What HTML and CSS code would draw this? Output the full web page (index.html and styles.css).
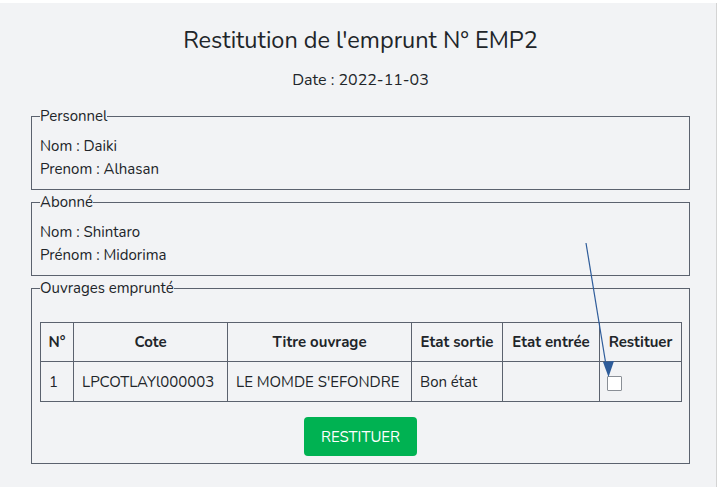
FILE: index.html
```html
<!DOCTYPE html>
<html lang="fr">
<head>
<meta charset="utf-8">
<title>Restitution</title>
<link rel="stylesheet" href="styles.css">
</head>
<body>
<div class="page">
  <main class="panel">
    <h1 class="title">Restitution de l'emprunt N° EMP2</h1>
    <p class="date">Date : 2022-11-03</p>

    <fieldset class="box">
      <legend>Personnel</legend>
      <p class="line">Nom : Daiki</p>
      <p class="line">Prenom : Alhasan</p>
    </fieldset>

    <fieldset class="box">
      <legend>Abonné</legend>
      <p class="line">Nom : Shintaro</p>
      <p class="line">Prénom : Midorima</p>
    </fieldset>

    <fieldset class="box box-works">
      <legend>Ouvrages emprunté</legend>
      <table class="grid">
        <colgroup>
          <col class="c-num"><col class="c-cote"><col class="c-titre"><col class="c-sortie"><col class="c-entree"><col class="c-rest">
        </colgroup>
        <thead>
          <tr><th>N°</th><th>Cote</th><th>Titre ouvrage</th><th>Etat sortie</th><th>Etat entrée</th><th>Restituer</th></tr>
        </thead>
        <tbody>
          <tr><td>1</td><td>LPCOTLAYl000003</td><td>LE MOMDE S'EFONDRE</td><td>Bon état</td><td></td><td><input class="check" type="checkbox"></td></tr>
        </tbody>
      </table>
      <div class="actions"><button class="btn" type="button">RESTITUER</button></div>
    </fieldset>
  </main>
  <svg class="arrow" width="725" height="500" viewBox="0 0 725 500" aria-hidden="true">
    <line x1="586" y1="243" x2="606" y2="365" stroke="#2e5c9a" stroke-width="1.2"/>
    <polygon points="603,362 614,361 608.5,377" fill="#2e5c9a"/>
  </svg>
</div>
</body>
</html>
```
FILE: styles.css
```css
html, body {
  margin: 0;
  padding: 0;
  background: #ffffff;
}
body {
  font-family: "Nunito", "Open Sans", sans-serif;
  color: #212529;
  width: 725px;
  height: 500px;
  overflow: hidden;
}
.page {
  position: relative;
  padding-top: 3px;
}
.panel {
  width: 717px;
  box-sizing: border-box;
  background: #f2f3f5;
  border-right: 1px solid #d4d4d4;
  padding: 22px 26px 21px 31px;
}
.title {
  margin: 0;
  font-size: 23.5px;
  font-weight: 400;
  line-height: 30px;
  text-align: center;
}
.date {
  margin: 13px 0 14px;
  font-size: 16px;
  line-height: 24px;
  text-align: center;
}
.box {
  margin: 0 0 2px;
  padding: 9px 8px 8px;
  border: 1px solid #5b626e;
  min-width: 0;
}
.box legend {
  padding: 0;
  font-size: 15px;
  line-height: 20px;
}
.line {
  margin: 0;
  font-size: 15px;
  line-height: 23px;
}
.box-works {
  padding-top: 24px;
  padding-bottom: 7px;
}
.grid {
  width: 641px;
  border-collapse: collapse;
  table-layout: fixed;
  font-size: 15px;
}
.c-num { width: 33px; }
.c-cote { width: 154px; }
.c-titre { width: 184px; }
.c-sortie { width: 91px; }
.c-entree { width: 97px; }
.c-rest { width: 82px; }
.grid th, .grid td {
  border: 1px solid #5b626e;
  padding: 0 8px;
  white-space: nowrap;
  overflow: hidden;
}
.grid th {
  height: 38px;
  font-weight: 700;
  text-align: center;
  padding: 0 2px;
}
.grid td {
  height: 39px;
  text-align: left;
}
.check {
  appearance: none;
  -webkit-appearance: none;
  display: block;
  width: 15px;
  height: 15px;
  margin: 4px 0 0 -1px;
  box-sizing: border-box;
  border: 1px solid #8a8f96;
  border-radius: 1px;
  background: #ffffff;
}
.actions {
  display: flex;
  justify-content: center;
  margin-top: 15px;
}
.btn {
  width: 113px;
  height: 39px;
  border: 0;
  border-radius: 4px;
  background: #00b252;
  color: #ffffff;
  font-family: inherit;
  font-size: 15px;
}
.arrow {
  position: absolute;
  left: 0;
  top: 0;
  pointer-events: none;
}
```
